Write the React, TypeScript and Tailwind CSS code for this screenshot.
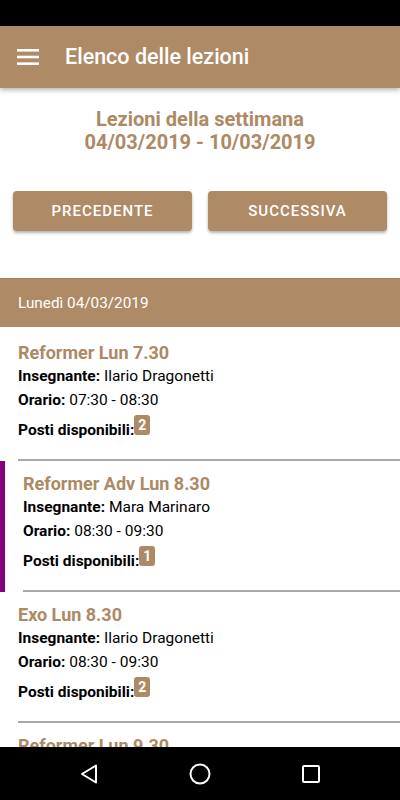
type Lesson = {
  title: string;
  teacher: string;
  time: string;
  seats: number;
  booked?: boolean;
};

const lessons: Lesson[] = [
  { title: "Reformer Lun 7.30", teacher: "Ilario Dragonetti", time: "07:30 - 08:30", seats: 2 },
  { title: "Reformer Adv Lun 8.30", teacher: "Mara Marinaro", time: "08:30 - 09:30", seats: 1, booked: true },
  { title: "Exo Lun 8.30", teacher: "Ilario Dragonetti", time: "08:30 - 09:30", seats: 2 },
  { title: "Reformer Lun 9.30", teacher: "Ilario Dragonetti", time: "09:30 - 10:30", seats: 3 },
];

const LessonCard = ({ lesson }: { lesson: Lesson }) => {
  return (
    <div
      className={
        lesson.booked
          ? "border-l-[5px] border-[#800080] pl-[18px] pt-[12px]"
          : "pl-[18px] pt-[12px]"
      }
    >
      <div className="text-[18px] leading-[22px] font-bold text-[#ad8964]">{lesson.title}</div>
      <div className="text-[15.5px] leading-[24px] text-black">
        <span className="font-bold">Insegnante:</span> {lesson.teacher}
      </div>
      <div className="text-[15.5px] leading-[24px] text-black">
        <span className="font-bold">Orario:</span> {lesson.time}
      </div>
      <div className="mt-[3px] flex items-start text-[15.5px] text-black">
        <span className="mt-[3px] font-bold leading-[24px]">Posti disponibili:</span>
        <span className="h-[20px] rounded-[3px] bg-[#ad8964] px-[4px] text-[14px] leading-[20px] font-bold text-white">
          {lesson.seats}
        </span>
      </div>
      <div className="mt-[17px] h-[2px] bg-[#a9a9a9]" />
    </div>
  );
};

export default function App() {
  return (
    <div
      className="flex h-[800px] w-[400px] flex-col overflow-hidden bg-white"
      style={{ fontFamily: "Roboto, 'Noto Sans', sans-serif" }}
    >
      <div className="h-[26px] shrink-0 bg-black" />

      <header className="relative z-10 flex h-[62px] shrink-0 items-center bg-[#ae8a66] shadow-[0_2px_5px_rgba(0,0,0,0.3)]">
        <svg className="ml-[17px]" width="22" height="18" viewBox="0 0 22 18" fill="white">
          <rect x="0" y="1" width="22" height="2.6" />
          <rect x="0" y="7.7" width="22" height="2.6" />
          <rect x="0" y="14.4" width="22" height="2.6" />
        </svg>
        <h1 className="ml-[26px] text-[21.5px] font-medium text-white">Elenco delle lezioni</h1>
      </header>

      <main className="flex-1 overflow-hidden">
        <div className="pt-[20px] text-center text-[20px] leading-[23px] font-bold text-[#ad8964]">
          <div>Lezioni della settimana</div>
          <div>04/03/2019 - 10/03/2019</div>
        </div>

        <div className="mt-[37px] grid grid-cols-2 gap-4 px-[13px]">
          <button className="h-[40px] rounded-[4px] bg-[#ae8a66] text-[15px] font-medium tracking-[1px] text-white shadow-[0_2px_3px_rgba(0,0,0,0.3)]">
            PRECEDENTE
          </button>
          <button className="h-[40px] rounded-[4px] bg-[#ae8a66] text-[15px] font-medium tracking-[1px] text-white shadow-[0_2px_3px_rgba(0,0,0,0.3)]">
            SUCCESSIVA
          </button>
        </div>

        <div className="mt-[47px] flex h-[49px] items-center border-t border-[#a37d55] bg-[#ae8a66] pl-[18px] text-[15.3px] text-white">
          Lunedì 04/03/2019
        </div>

        <div className="pt-[3px]">
          {lessons.map((lesson, index) => (
            <LessonCard key={index} lesson={lesson} />
          ))}
        </div>
      </main>

      <nav className="flex h-[53px] shrink-0 items-center gap-[89px] bg-black pl-[78px]">
        <svg width="22" height="22" viewBox="0 0 22 22" fill="none" stroke="white" strokeWidth="2" strokeLinejoin="round">
          <path d="M18 2.5 L4 11 L18 19.5 Z" />
        </svg>
        <svg width="22" height="22" viewBox="0 0 22 22" fill="none" stroke="white" strokeWidth="2">
          <circle cx="11" cy="11" r="9.5" />
        </svg>
        <svg width="22" height="22" viewBox="0 0 22 22" fill="none" stroke="white" strokeWidth="2">
          <rect x="3" y="3" width="16" height="16" rx="1" />
        </svg>
      </nav>
    </div>
  );
}
